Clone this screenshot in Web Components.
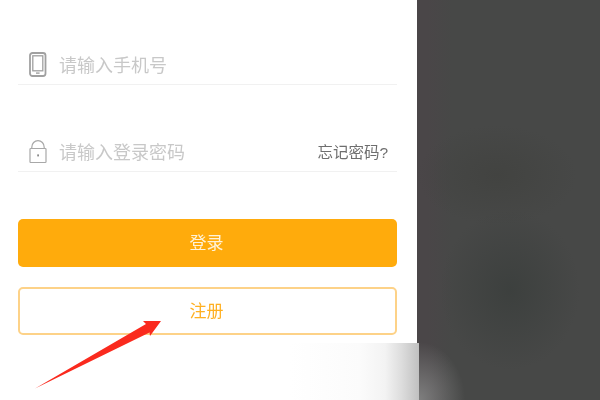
<!DOCTYPE html>
<html lang="zh">
<head>
<meta charset="utf-8">
<title>登录</title>
<style>
html, body { margin: 0; height: 100%; background: #fff; overflow: hidden; }
</style>
</head>
<body>
<login-screen>
    <login-field>
        <svg slot="icon" width="18" height="25" viewBox="0 0 18 25">
            <rect x="1" y="1" width="15.5" height="23" rx="2.5" fill="none" stroke="#a0a0a0" stroke-width="1.8"/>
            <rect x="3.8" y="3.8" width="10" height="15" fill="none" stroke="#a0a0a0" stroke-width="1.3"/>
            <rect x="7" y="20.4" width="3.6" height="1.4" fill="#a0a0a0"/>
        </svg>
        <span slot="hint">请输入手机号</span>
    </login-field>
    <login-field>
        <svg slot="icon" width="18" height="25" viewBox="0 0 18 25">
            <path d="M2.8 9.5V8.2a6.2 6.6 0 0 1 12.4 0v1.3" fill="none" stroke="#a8a8a8" stroke-width="1.2"/>
            <rect x="1" y="9.5" width="16" height="14" rx="0.8" fill="none" stroke="#a8a8a8" stroke-width="1.2"/>
            <rect x="8.2" y="15.4" width="1.8" height="2" fill="#8a8a8a"/>
        </svg>
        <span slot="hint">请输入登录密码</span>
        <span slot="action">忘记密码?</span>
    </login-field>
    <login-button kind="solid">登录</login-button>
    <login-button kind="outline">注册</login-button>
</login-screen>

<script>
const FONT = '"Liberation Sans", "Noto Sans CJK SC", sans-serif';

class LoginField extends HTMLElement {
    constructor() {
        super();
        this.attachShadow({mode: 'open'});
    }

    connectedCallback() {
        this.shadowRoot.innerHTML = `
            <style>
                :host {
                    display: flex;
                    align-items: center;
                    box-sizing: border-box;
                    height: 40px;
                    margin-bottom: 47px;
                    padding: 0 9px 2px 11px;
                    border-bottom: 1px solid #f1f1f1;
                    font-family: ${FONT};
                }
                .icon { display: flex; width: 18px; margin: 2px 12px 0 0; }
                .hint { flex: 1; font-size: 18px; color: #c8c8c8; filter: blur(0.4px); }
                .action { font-size: 15.5px; color: #6e6e6e; filter: blur(0.4px); }
            </style>
            <div class="icon"><slot name="icon"></slot></div>
            <div class="hint"><slot name="hint"></slot></div>
            <div class="action"><slot name="action"></slot></div>
        `;
    }
}

class LoginButton extends HTMLElement {
    constructor() {
        super();
        this.attachShadow({mode: 'open'});
    }

    connectedCallback() {
        this.shadowRoot.innerHTML = `
            <style>
                :host {
                    display: flex;
                    align-items: center;
                    justify-content: center;
                    box-sizing: border-box;
                    height: 48px;
                    margin-bottom: 20px;
                    padding-bottom: 3px;
                    border-radius: 5px;
                    font-family: ${FONT};
                    font-size: 17px;
                }
                :host([kind="solid"]) { background: #ffab0c; color: #fff3da; }
                :host([kind="outline"]) { background: #fff; color: #ffb022; border: 2px solid #fdd288; }
                span { filter: blur(0.4px); margin-right: 2px; }
            </style>
            <span><slot></slot></span>
        `;
    }
}

class LoginScreen extends HTMLElement {
    constructor() {
        super();
        this.attachShadow({mode: 'open'});
    }

    connectedCallback() {
        this.shadowRoot.innerHTML = `
            <style>
                :host {
                    display: grid;
                    grid-template-columns: 417px 1fr;
                    width: 600px;
                    height: 400px;
                    position: relative;
                }
                .left { display: flex; flex-direction: column; }
                .form { height: 343px; box-sizing: border-box; padding: 45px 20px 0 18px; }
                .fade {
                    height: 57px;
                    margin-right: -2px;
                    position: relative;
                    background: linear-gradient(to right, #fff 0, #fff 290px, #fbfbfb 360px, #f3f3f3 385px, #dcdcdc 402px, #c0c0c0 419px);
                }
                .dark {
                    background:
                        radial-gradient(46px 58px at 2px 400px, #7f7f7f, rgba(127,127,127,0) 100%),
                        radial-gradient(70px 80px at 93px 290px, rgba(58,62,60,0.8), rgba(58,62,60,0) 100%),
                        radial-gradient(80px 50px at 80px 175px, rgba(64,65,62,0.7), rgba(64,65,62,0) 100%),
                        linear-gradient(to right, #4a4648 0, #4a4648 10px, rgba(74,70,72,0) 35px),
                        #474847;
                }
                .arrow { position: absolute; left: 30px; top: 314px; filter: blur(0.3px); }
            </style>
            <div class="left">
                <div class="form"><slot></slot></div>
                <div class="fade"></div>
            </div>
            <div class="dark"></div>
            <svg class="arrow" width="140" height="80" viewBox="0 0 140 80">
                <path d="M5 74.5 L116 10 L113 7 L131 7 L120 22 L119.5 18.5 Z" fill="#fa2a1e"/>
            </svg>
        `;
    }
}

customElements.define('login-field', LoginField);
customElements.define('login-button', LoginButton);
customElements.define('login-screen', LoginScreen);
</script>
</body>
</html>
